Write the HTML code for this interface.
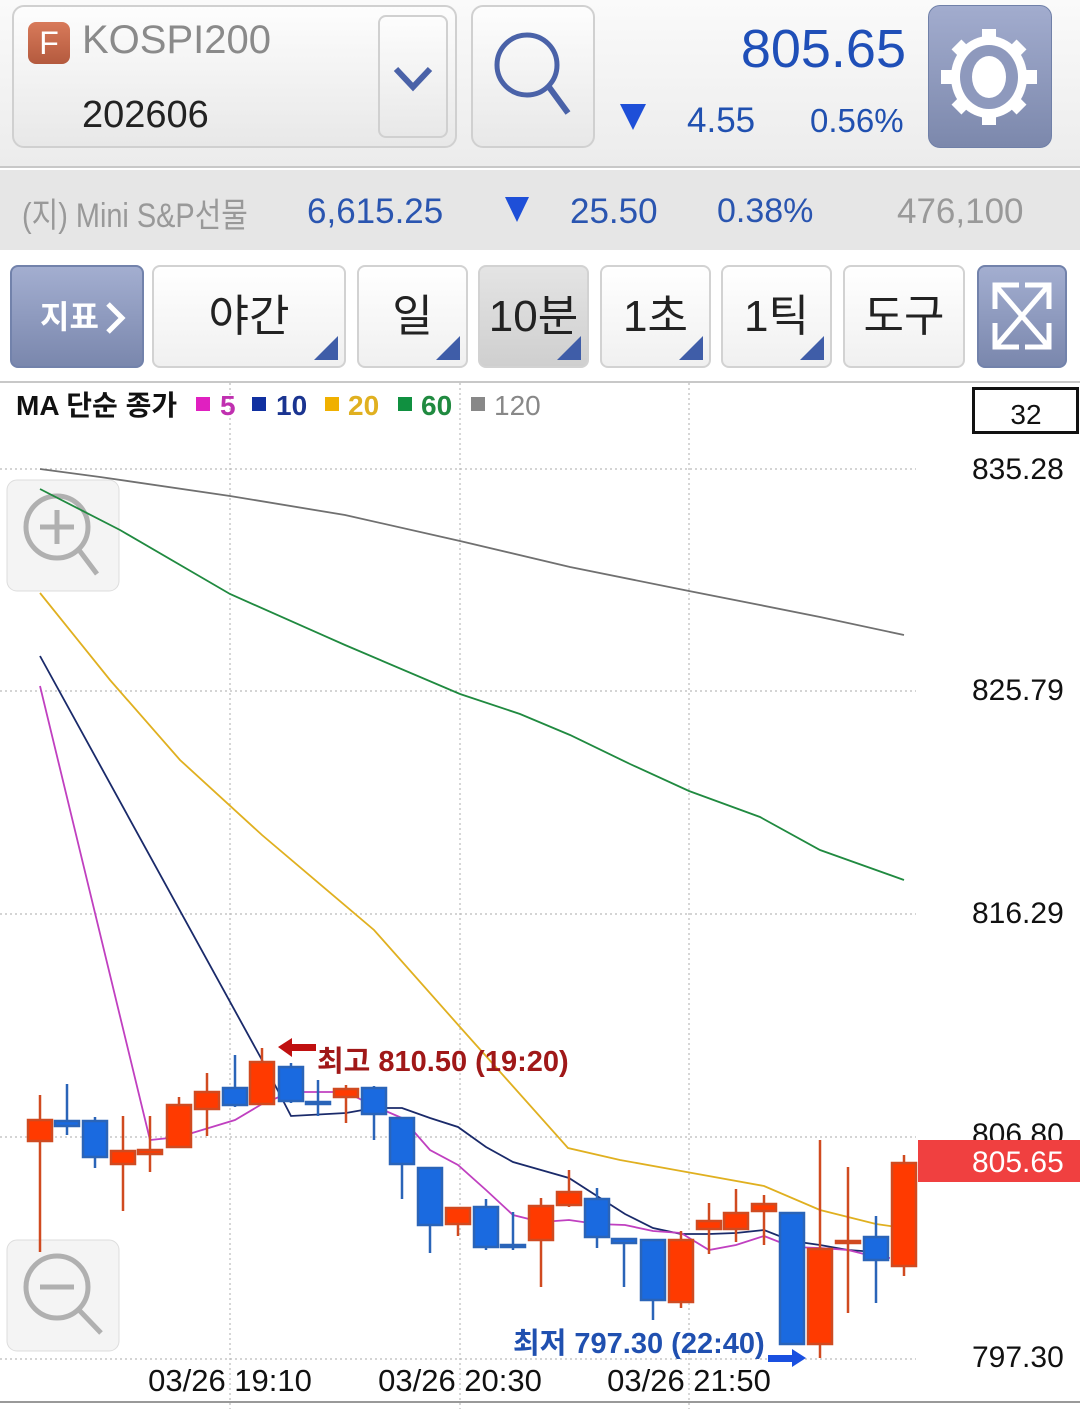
<!DOCTYPE html>
<html><head><meta charset="utf-8"><style>
*{margin:0;padding:0;box-sizing:border-box}
body{width:1080px;height:1409px;overflow:hidden;background:#fff;font-family:"Liberation Sans","Noto Sans CJK KR",sans-serif;position:relative}
.a{position:absolute}
.top{left:0;top:0;width:1080px;height:168px;background:linear-gradient(#fafafa,#ececec);border-bottom:2px solid #c8c8c8}
.row2{left:0;top:170px;width:1080px;height:80px;background:#e6e6e6}
.box{border:2px solid #d0d0d0;border-radius:12px;background:linear-gradient(#fdfdfd,#e8e8e8)}
.btn{top:265px;height:103px;border:2px solid #d2d2d2;border-radius:8px;background:linear-gradient(#fff,#f0f0f0);font-size:44px;color:#222;text-align:center;line-height:100px}
.tri{position:absolute;right:6px;bottom:6px;width:0;height:0;border-left:24px solid transparent;border-bottom:24px solid #3f5da8}
.t{white-space:nowrap}
</style></head><body>
<div class="a top"></div>
<div class="a box" style="left:12px;top:5px;width:445px;height:143px"></div>
<div class="a" style="left:28px;top:22px;width:42px;height:42px;border-radius:8px;background:linear-gradient(#d87a5a,#b45a3e);color:#fff;font-size:32px;line-height:42px;text-align:center">F</div>
<div class="a t" style="left:82px;top:18px;font-size:40px;color:#8a8a8a">KOSPI200</div>
<div class="a t" style="left:82px;top:94px;font-size:38px;color:#222">202606</div>
<div class="a box" style="left:378px;top:15px;width:70px;height:123px;border-radius:8px"></div>
<svg class="a" style="left:378px;top:15px" width="70" height="123"><path d="M18 54 L35 72 L52 54" fill="none" stroke="#4a62a8" stroke-width="6"/></svg>
<div class="a box" style="left:471px;top:5px;width:124px;height:143px"></div>
<svg class="a" style="left:471px;top:5px" width="124" height="143"><circle cx="56" cy="60" r="30" fill="none" stroke="#4a62a8" stroke-width="5"/><line x1="78" y1="82" x2="97" y2="108" stroke="#4a62a8" stroke-width="6"/></svg>
<div class="a t" style="right:174px;top:18px;font-size:54px;color:#1f4fb8">805.65</div>
<div class="a" style="left:620px;top:104px;width:0;height:0;border-left:13px solid transparent;border-right:13px solid transparent;border-top:26px solid #1e4fd8"></div>
<div class="a t" style="left:687px;top:101px;font-size:35px;color:#2050b0">4.55</div>
<div class="a t" style="left:810px;top:102px;font-size:33px;color:#2050b0">0.56%</div>
<div class="a" style="left:928px;top:5px;width:124px;height:143px;border-radius:12px;background:linear-gradient(#a2acce,#7c88ac);border:1px solid #7080a8"></div>
<svg class="a" style="left:928px;top:5px" width="124" height="143">
<g transform="translate(61,72)" fill="#fff">
<rect x="-7" y="-48" width="14" height="96"/><rect x="-48" y="-7" width="96" height="14"/>
<rect x="-7" y="-46" width="14" height="92" transform="rotate(45)"/><rect x="-7" y="-46" width="14" height="92" transform="rotate(-45)"/>
<ellipse rx="38" ry="41"/><ellipse rx="29" ry="32" fill="#8e99bd"/><ellipse rx="17" ry="21"/>
</g></svg>
<div class="a row2"></div>
<div class="a t" style="left:22px;top:188px;font-size:34px;color:#999;transform:scaleX(.85);transform-origin:left">(지) Mini S&amp;P선물</div>
<div class="a t" style="left:307px;top:192px;font-size:35px;color:#2a55b0">6,615.25</div>
<div class="a" style="left:505px;top:197px;width:0;height:0;border-left:12px solid transparent;border-right:12px solid transparent;border-top:25px solid #1e4fd8"></div>
<div class="a t" style="left:570px;top:192px;font-size:35px;color:#2a55b0">25.50</div>
<div class="a t" style="left:717px;top:192px;font-size:34px;color:#2a55b0">0.38%</div>
<div class="a t" style="left:897px;top:192px;font-size:35px;color:#999">476,100</div>

<div class="a btn" style="left:10px;width:134px;background:linear-gradient(#a3aed0,#7a87ad);border-color:#7282ab;color:#fff;font-size:32px;font-weight:bold;text-align:left;padding-left:28px">지표</div>
<svg class="a" style="left:102px;top:300px" width="30" height="36"><path d="M6 4 L20 18 L6 32" fill="none" stroke="#fff" stroke-width="5"/></svg>
<div class="a btn" style="left:152px;width:194px">야간<div class="tri"></div></div>
<div class="a btn" style="left:357px;width:111px">일<div class="tri"></div></div>
<div class="a btn" style="left:478px;width:111px;background:linear-gradient(#e4e4e4,#cfcfcf)">10분<div class="tri"></div></div>
<div class="a btn" style="left:600px;width:111px">1초<div class="tri"></div></div>
<div class="a btn" style="left:721px;width:111px">1틱<div class="tri"></div></div>
<div class="a btn" style="left:843px;width:122px">도구</div>
<div class="a btn" style="left:977px;width:90px;background:linear-gradient(#a3aed0,#7a87ad);border-color:#7282ab"></div>
<svg class="a" style="left:977px;top:265px" width="90" height="103" fill="none" stroke="#fff" stroke-width="5">
<path d="M18 44 V20 H42 M48 20 H72 V44 M18 58 V82 H42 M48 82 H72 V58 M20 22 L70 80 M70 22 L20 80"/></svg>
<div class="a" style="left:0;top:381px;width:1080px;height:2px;background:#c8c8c8"></div>

<svg class="a" style="left:0;top:0" width="1080" height="1409">
<g>
<rect x="7" y="480" width="112" height="111" rx="10" fill="#f4f4f4" stroke="#ddd"/>
<circle cx="57" cy="527" r="31" fill="none" stroke="#b0b0b0" stroke-width="5"/>
<path d="M57 510 V544 M40 527 H74 M79 550 L97 574" stroke="#b0b0b0" stroke-width="5" fill="none"/>
<rect x="7" y="1240" width="112" height="111" rx="10" fill="#f4f4f4" stroke="#ddd"/>
<circle cx="57" cy="1287" r="31" fill="none" stroke="#b0b0b0" stroke-width="5"/>
<path d="M40 1287 H74 M79 1310 L101 1333" stroke="#b0b0b0" stroke-width="5" fill="none"/>
</g>
<g stroke="#bbb" stroke-width="1.2" stroke-dasharray="2,3">
<line x1="0" y1="469" x2="916" y2="469"/><line x1="0" y1="691" x2="916" y2="691"/><line x1="0" y1="914" x2="916" y2="914"/><line x1="0" y1="1137" x2="916" y2="1137"/><line x1="0" y1="1359" x2="916" y2="1359"/>
<line x1="230" y1="383" x2="230" y2="1409"/><line x1="460" y1="383" x2="460" y2="1409"/><line x1="689" y1="383" x2="689" y2="1409"/>
</g>
<line x1="0" y1="1402" x2="1080" y2="1402" stroke="#999" stroke-width="2"/>
<g fill="none" stroke-width="1.8">
<polyline stroke="#707070" points="40,469 100,477 230,496 345,515 460,541 570,567 689,591 760,605 820,617 904,635"/>
<polyline stroke="#208a40" points="40,489 120,530 230,594 345,645 460,694 520,714 570,735 630,764 689,791 760,817 820,850 904,880"/>
<polyline stroke="#e0b020" points="40,593 110,680 180,760 262,835 374,930 460,1027 568,1148 620,1160 681,1171 764,1186 820,1210 876,1224 904,1228"/>
<polyline stroke="#1a2a6a" points="40,656 262,1060 291,1116 346,1113 374,1108 402,1108 430,1118 458,1127 486,1147 513,1162 541,1170 569,1178 597,1196 625,1214 653,1228 681,1234 709,1234 736,1233 764,1230 792,1241 820,1245 848,1250 876,1252"/>
<polyline stroke="#c040c0" points="40,686 150,1140 179,1137 235,1120 262,1104 291,1092 346,1092 374,1106 402,1118 430,1150 458,1165 486,1190 513,1215 541,1222 569,1220 597,1224 625,1225 653,1231 681,1233 709,1250 736,1245 764,1236 792,1247 820,1248 848,1250 876,1257 890,1258"/>
</g>
<g stroke-width="2.5">
<g stroke="#d04a20" fill="#ff3a00">
<line x1="40" y1="1095" x2="40" y2="1252"/><rect x="28" y="1120" width="24" height="21"/>
<line x1="123" y1="1116" x2="123" y2="1211"/><rect x="111" y="1151" width="24" height="13"/>
<line x1="150" y1="1116" x2="150" y2="1172"/><rect x="138" y="1150" width="24" height="4"/>
<line x1="179" y1="1097" x2="179" y2="1147"/><rect x="167" y="1105" width="24" height="42"/>
<line x1="207" y1="1073" x2="207" y2="1136"/><rect x="195" y="1092" width="24" height="17"/>
<line x1="262" y1="1048" x2="262" y2="1104"/><rect x="250" y="1062" width="24" height="42"/>
<line x1="346" y1="1085" x2="346" y2="1123"/><rect x="334" y="1089" width="24" height="8"/>
<line x1="458" y1="1208" x2="458" y2="1236"/><rect x="446" y="1208" width="24" height="16"/>
<line x1="541" y1="1198" x2="541" y2="1287"/><rect x="529" y="1206" width="24" height="34"/>
<line x1="569" y1="1170" x2="569" y2="1207"/><rect x="557" y="1192" width="24" height="13"/>
<line x1="681" y1="1231" x2="681" y2="1308"/><rect x="669" y="1240" width="24" height="62"/>
<line x1="709" y1="1203" x2="709" y2="1254"/><rect x="697" y="1221" width="24" height="8"/>
<line x1="736" y1="1189" x2="736" y2="1242"/><rect x="724" y="1213" width="24" height="16"/>
<line x1="764" y1="1195" x2="764" y2="1245"/><rect x="752" y="1204" width="24" height="7"/>
<line x1="820" y1="1140" x2="820" y2="1358"/><rect x="808" y="1249" width="24" height="95"/>
<line x1="848" y1="1167" x2="848" y2="1313"/><rect x="836" y="1241" width="24" height="2"/>
<line x1="904" y1="1155" x2="904" y2="1276"/><rect x="892" y="1163" width="24" height="103"/>
</g>
<g stroke="#2a64b8" fill="#1a6ae0">
<line x1="67" y1="1084" x2="67" y2="1135"/><rect x="55" y="1121" width="24" height="5"/>
<line x1="95" y1="1117" x2="95" y2="1168"/><rect x="83" y="1121" width="24" height="36"/>
<line x1="235" y1="1055" x2="235" y2="1107"/><rect x="223" y="1088" width="24" height="17"/>
<line x1="291" y1="1063" x2="291" y2="1103"/><rect x="279" y="1067" width="24" height="34"/>
<line x1="318" y1="1080" x2="318" y2="1116"/><rect x="306" y="1102" width="24" height="2"/>
<line x1="374" y1="1086" x2="374" y2="1140"/><rect x="362" y="1088" width="24" height="26"/>
<line x1="402" y1="1118" x2="402" y2="1199"/><rect x="390" y="1118" width="24" height="46"/>
<line x1="430" y1="1167" x2="430" y2="1253"/><rect x="418" y="1168" width="24" height="57"/>
<line x1="486" y1="1199" x2="486" y2="1250"/><rect x="474" y="1207" width="24" height="40"/>
<line x1="513" y1="1212" x2="513" y2="1250"/><rect x="501" y="1245" width="24" height="2"/>
<line x1="597" y1="1188" x2="597" y2="1248"/><rect x="585" y="1199" width="24" height="38"/>
<line x1="624" y1="1239" x2="624" y2="1287"/><rect x="612" y="1239" width="24" height="4"/>
<line x1="653" y1="1240" x2="653" y2="1320"/><rect x="641" y="1240" width="24" height="60"/>
<line x1="792" y1="1213" x2="792" y2="1344"/><rect x="780" y="1213" width="24" height="131"/>
<line x1="876" y1="1216" x2="876" y2="1303"/><rect x="864" y="1237" width="24" height="23"/>
</g></g>
<path d="M278 1047 L292 1038 V1044 H316 V1051 H292 V1057 Z" fill="#c01010"/>
<path d="M806 1358 L792 1349 V1355 H768 V1362 H792 V1367 Z" fill="#1a50e0"/>
<text x="317" y="1071" font-size="29" font-weight="bold" fill="#a01818" font-family="Liberation Sans,Noto Sans CJK KR,sans-serif">최고 810.50 (19:20)</text>
<text x="513" y="1353" font-size="29" font-weight="bold" fill="#2050b0" font-family="Liberation Sans,Noto Sans CJK KR,sans-serif">최저 797.30 (22:40)</text>
<g font-size="30" fill="#111" font-family="Liberation Sans,sans-serif">
<text x="972" y="479">835.28</text><text x="972" y="700">825.79</text><text x="972" y="923">816.29</text><text x="972" y="1144">806.80</text><text x="972" y="1367">797.30</text>
<text x="230" y="1391" text-anchor="middle" font-size="31">03/26 19:10</text><text x="460" y="1391" text-anchor="middle" font-size="31">03/26 20:30</text><text x="689" y="1391" text-anchor="middle" font-size="31">03/26 21:50</text>
</g>
<rect x="918" y="1140" width="162" height="42" fill="#f04040"/>
<text x="972" y="1172" font-size="30" fill="#fff" font-family="Liberation Sans,sans-serif">805.65</text>
<rect x="973.5" y="388.5" width="104" height="44" fill="#fff" stroke="#111" stroke-width="3"/>
<text x="1026" y="424" font-size="28" fill="#111" text-anchor="middle" font-family="Liberation Sans,sans-serif">32</text>
<g font-size="28" font-weight="bold" font-family="Liberation Sans,Noto Sans CJK KR,sans-serif">
<text x="16" y="415" fill="#111">MA 단순 종가</text>
<rect x="196" y="397" width="14" height="14" fill="#e020c0"/><text x="220" y="415" fill="#c030b0">5</text>
<rect x="252" y="397" width="14" height="14" fill="#1030a0"/><text x="276" y="415" fill="#1a3490">10</text>
<rect x="325" y="397" width="14" height="14" fill="#f0b000"/><text x="348" y="415" fill="#e0b020">20</text>
<rect x="398" y="397" width="14" height="14" fill="#109040"/><text x="421" y="415" fill="#208a40">60</text>
<rect x="471" y="397" width="14" height="14" fill="#888"/><text x="494" y="415" fill="#888" font-weight="normal">120</text>
</g>
</svg>
</body></html>
